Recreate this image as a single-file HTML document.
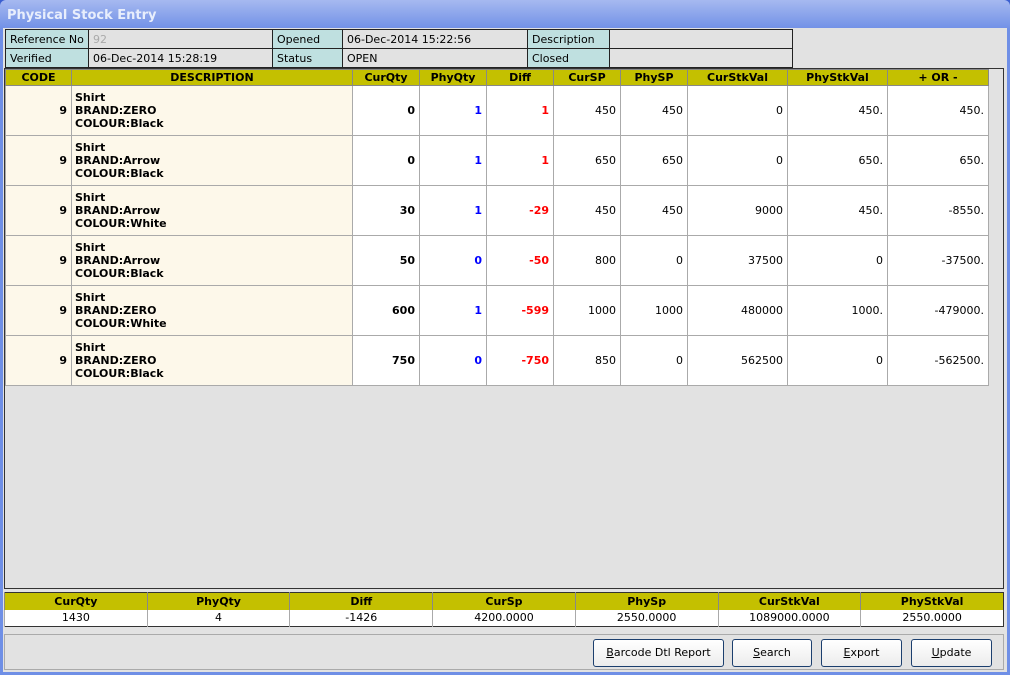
<!DOCTYPE html><html><head><style>
*{box-sizing:border-box;margin:0;padding:0}
body{width:1010px;height:675px;background:#3b5fd0;font-family:"DejaVu Sans","Liberation Sans",sans-serif;font-size:11px;position:relative;overflow:hidden}
.win{position:absolute;left:0;top:0;width:1010px;height:675px;background:linear-gradient(#a6b9f0,#6f8fe6 30px);border-radius:6px 6px 0 0}
.title{position:absolute;left:7px;top:8px;color:#e8eefc;font-weight:bold;font-size:13px}
.client{position:absolute;left:3px;top:28px;width:1004px;height:644px;background:#e2e2e2}
.abs{position:absolute}
table{border-collapse:collapse}
.info td{border:1px solid #222;height:19px;padding:0 4px;font-size:11px}
.lab{background:#bfe0e0}
.grid{position:absolute;left:1px;top:40px;width:1000px;height:521px;border:1px solid #333;background:#e2e2e2}
.g td,.g th{border:1px solid #aaa;font-size:11px}
.g th{background:#c4c000;height:16px;font-weight:bold;border-color:#888}
.g td{height:50px;background:#fff;text-align:right;padding-right:4px;font-weight:bold}
.g td.c{background:#fdf8ea}
.g td.d{text-align:left;padding-left:3px;line-height:13px;background:#fdf8ea}
.g td.n{font-weight:normal}
.b{color:#0000ff}.r{color:#ff0000}
.sum{position:absolute;left:1px;top:564px;width:1000px;border:1px solid #333}
.sum th{background:#c4c000;height:17px;border-left:1px solid #888}
.sum td{background:#fff;height:17px;text-align:center;border-left:1px solid #aaa}
.bar{position:absolute;left:1px;top:606px;width:1000px;height:36px;border:1px solid #aaa}
.btn{position:absolute;top:4px;height:28px;border:1px solid #1c3f6e;border-radius:3px;background:linear-gradient(#fff,#ececec);text-align:center;line-height:26px;font-size:11px}
</style></head><body><div class="win"><div class="title">Physical Stock Entry</div>
<div class="client">
<table class="info abs" style="left:2px;top:1px;width:788px">
<tr><td class="lab" style="width:83px">Reference No</td><td style="width:184px;color:#aaa;background:#e2e2e2">92</td><td class="lab" style="width:70px">Opened</td><td style="width:185px">06-Dec-2014 15:22:56</td><td class="lab" style="width:82px">Description</td><td></td></tr>
<tr><td class="lab">Verified</td><td>06-Dec-2014 15:28:19</td><td class="lab">Status</td><td>OPEN</td><td class="lab">Closed</td><td></td></tr>
</table>
<div class="grid">
<table class="g" style="width:984px">
<tr><th style="width:66px">CODE</th><th style="width:281px">DESCRIPTION</th><th style="width:67px">CurQty</th><th style="width:67px">PhyQty</th><th style="width:67px">Diff</th><th style="width:67px">CurSP</th><th style="width:67px">PhySP</th><th style="width:100px">CurStkVal</th><th style="width:100px">PhyStkVal</th><th>+ OR -</th></tr>
<tr><td class="c">9</td><td class="d">Shirt<br>BRAND:ZERO<br>COLOUR:Black</td><td>0</td><td class="b">1</td><td class="r">1</td><td class="n">450</td><td class="n">450</td><td class="n">0</td><td class="n">450.</td><td class="n">450.</td></tr>
<tr><td class="c">9</td><td class="d">Shirt<br>BRAND:Arrow<br>COLOUR:Black</td><td>0</td><td class="b">1</td><td class="r">1</td><td class="n">650</td><td class="n">650</td><td class="n">0</td><td class="n">650.</td><td class="n">650.</td></tr>
<tr><td class="c">9</td><td class="d">Shirt<br>BRAND:Arrow<br>COLOUR:White</td><td>30</td><td class="b">1</td><td class="r">-29</td><td class="n">450</td><td class="n">450</td><td class="n">9000</td><td class="n">450.</td><td class="n">-8550.</td></tr>
<tr><td class="c">9</td><td class="d">Shirt<br>BRAND:Arrow<br>COLOUR:Black</td><td>50</td><td class="b">0</td><td class="r">-50</td><td class="n">800</td><td class="n">0</td><td class="n">37500</td><td class="n">0</td><td class="n">-37500.</td></tr>
<tr><td class="c">9</td><td class="d">Shirt<br>BRAND:ZERO<br>COLOUR:White</td><td>600</td><td class="b">1</td><td class="r">-599</td><td class="n">1000</td><td class="n">1000</td><td class="n">480000</td><td class="n">1000.</td><td class="n">-479000.</td></tr>
<tr><td class="c">9</td><td class="d">Shirt<br>BRAND:ZERO<br>COLOUR:Black</td><td>750</td><td class="b">0</td><td class="r">-750</td><td class="n">850</td><td class="n">0</td><td class="n">562500</td><td class="n">0</td><td class="n">-562500.</td></tr>
</table></div>
<table class="sum" style="table-layout:fixed">
<tr><th>CurQty</th><th>PhyQty</th><th>Diff</th><th>CurSp</th><th>PhySp</th><th>CurStkVal</th><th>PhyStkVal</th></tr>
<tr><td>1430</td><td>4</td><td>-1426</td><td>4200.0000</td><td>2550.0000</td><td>1089000.0000</td><td>2550.0000</td></tr>
</table>
<div class="bar">
<div class="btn" style="left:588px;width:131px"><u>B</u>arcode Dtl Report</div>
<div class="btn" style="left:727px;width:80px"><u>S</u>earch</div>
<div class="btn" style="left:816px;width:81px"><u>E</u>xport</div>
<div class="btn" style="left:906px;width:81px"><u>U</u>pdate</div>
</div>
</div></div></body></html>
